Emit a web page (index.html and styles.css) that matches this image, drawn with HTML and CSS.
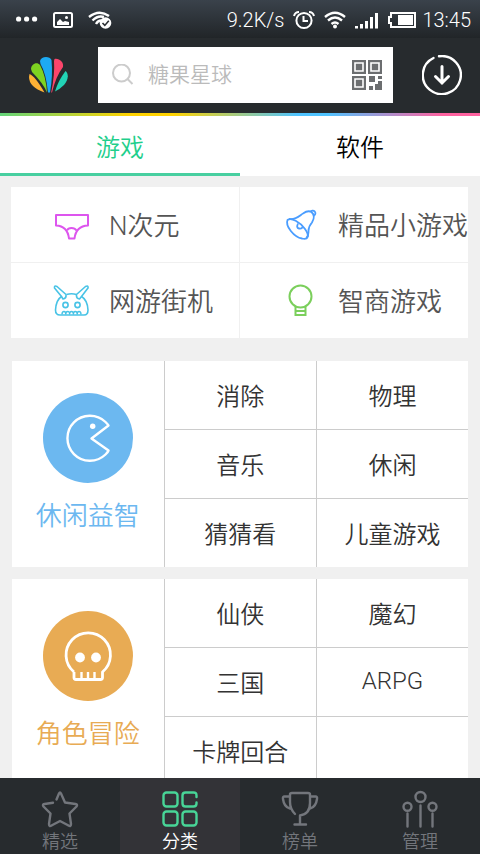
FILE: index.html
```html
<!DOCTYPE html>
<html lang="zh-CN">
<head>
<meta charset="utf-8">
<meta name="viewport" content="width=device-width, initial-scale=1">
<title>分类</title>
<link rel="stylesheet" href="styles.css">
</head>
<body>
<div class="status">
  <div class="status-group status-left">
    <svg width="22" height="20" viewBox="0 0 22 20" fill="#fff"><circle cx="2.600" cy="9" r="2.600"/><circle cx="10.600" cy="9" r="2.600"/><circle cx="18.600" cy="9" r="2.600"/></svg>
    <svg width="20" height="20" viewBox="0 0 20 20"><rect x="1" y="3" width="18" height="14" rx="1.500" fill="none" stroke="#fff" stroke-width="2"/><path d="M4 15V12l3-3 3 3 2-1 4 1v3z" fill="#fff"/><circle cx="13.500" cy="7.500" r="1.500" fill="#fff"/></svg>
    <svg width="24" height="20" viewBox="0 0 24 20"><g fill="none" stroke="#fff" stroke-width="2.400"><path d="M1 7Q11-1 21 6"/><path d="M4.500 10.500Q10 5 16 7"/><path d="M8 14Q10 10.500 13 10.500"/></g><circle cx="17.500" cy="13" r="5.800" fill="#fff"/><path d="M14.500 13l2.300 2.400 4-4.600" fill="none" stroke="#2a2e32" stroke-width="1.600"/></svg>
  </div>
  <div class="status-group status-right">
    <span>9.2K/s</span>
    <svg width="22" height="20" viewBox="0 0 22 20" fill="none" stroke="#fff" stroke-width="2"><circle cx="11" cy="10.500" r="7.600"/><path d="M10.500 6v5H15M1 6Q2 2 6 2M16 2q4 0 5 4"/></svg>
    <svg width="22" height="20" viewBox="0 0 22 20" fill="none" stroke="#fff" stroke-width="2.400"><path d="M1 7Q11-1.500 21 7M4 10.500q7-6 14 0M7.500 14q3.500-3 7 0"/><circle cx="11" cy="16.500" r="2" fill="#fff" stroke="none"/></svg>
    <svg width="24" height="20" viewBox="0 0 24 20" fill="#fff"><path d="M0 16h3v2.500H0zM5 14h3v4.500H5zM10 11h3v7.500h-3zM15 7h3v11.500h-3zM20 3h3v15.500h-3z"/></svg>
    <svg width="28" height="20" viewBox="0 0 28 20"><path d="M3 3h24v14H3V13H1V7h2z" fill="none" stroke="#fff" stroke-width="2"/><path d="M10 5h15v10H10z" fill="#fff"/></svg>
    <span>13:45</span>
  </div>
</div>

<header class="header">
  <a class="logo" href="#" aria-label="首页">
    <svg width="40" height="38" viewBox="0 0 40 38">
      <path d="M1.500 18Q7 20 16.500 36.500Q1 31 1 21Z" fill="#ffb235"/>
      <path d="M3 13C3 8 9 5 12 9Q18 20 19 36.500Q15 27 4 16Z" fill="#7ed321"/>
      <path d="M12 5C13 0 22 0 23.500 4Q25 20 22 36.500H20Q18 17 12.500 8Z" fill="#1daaf2"/>
      <path d="M26.500 3C31 2 36 6 35 11Q28 20 24 36.500H23.200Q27 18 26 5Z" fill="#fb456b"/>
      <path d="M37.500 15C41 18 40.500 24 36 29Q32 33 27 35.500Q30 25 37.500 15Z" fill="#22d3b6"/>
    </svg>
  </a>
  <form class="search">
    <svg width="22" height="22" viewBox="0 0 22 22" fill="none" stroke="#ccc" stroke-width="2"><circle cx="9.500" cy="9" r="8.500"/><path d="M15.500 15l5 5"/></svg>
    <input type="search" placeholder="糖果星球" aria-label="搜索">
    <button type="button" class="scan" aria-label="扫码">
      <svg width="30" height="30" viewBox="0 0 30 30"><g fill="#6c6e70"><path d="M0 0h14v14H0zM16 0h14v14H16zM0 16h14v14H0z"/><path d="M17 16h6v6h-6zM26 16h4v3h-4zM17 26h4v4h-4zM26 21h4v9h-7v-6h3z"/></g><g fill="none" stroke="#fff" stroke-width="1.600"><path d="M3 3h8v8H3zM19 3h8v8h-8zM3 19h8v8H3z"/></g></svg>
    </button>
  </form>
  <button class="download" type="button" aria-label="下载">
    <svg width="40" height="40" viewBox="0 0 40 40" fill="none" stroke="#fff" stroke-linecap="round"><path d="M17 1.300A19 19 0 1 1 11.500 3" stroke-width="2.400"/><path d="M20 11.500V28M13.500 21.500L20 28l6.500-6.500" stroke-width="3"/></svg>
  </button>
</header>

<nav class="tabs">
  <a class="tab active" href="#games">游戏</a>
  <a class="tab" href="#apps">软件</a>
</nav>

<main class="content">
  <section class="quick">
    <a href="#"><svg width="36" height="36" viewBox="0 0 36 36" fill="none" stroke="#dd55ee" stroke-width="2" stroke-linejoin="round"><path d="M3 8h32v10.500Q23 19 21.500 31.500H16Q14.500 19 3 18.500z"/><path d="M14 23.500Q15 21 18.500 21T23.500 23.500"/></svg><span>N次元</span></a>
    <a href="#"><svg width="36" height="36" viewBox="0 0 36 36" fill="none" stroke="#4a9dff" stroke-width="1.800"><path d="M5.500 13C9 10 18 15 23 22S26 33 20 31.500C12 30 3 19 5.500 13z"/><path d="M7 12C15 13 18 8 21 6.500Q26 3 29.500 5Q34 9 30 15.500C26 20 26.500 22 26.500 25Q26.500 29 24.500 31"/><path d="M28.500 5a2.600 2.600 0 1 1 3.500 3.500"/><path d="M16 16.500Q14 21 17 21.500T20.500 20"/></svg><span>精品小游戏</span></a>
    <a href="#"><svg width="36" height="36" viewBox="0 0 36 36" fill="none" stroke="#48c3e6" stroke-width="1.600" stroke-linejoin="round"><path d="M8.500 13.500L1.500 5Q1 2 4 3.500L13 11.500Q13.500 15.500 10 16z"/><path d="M28.500 13.500L35 5Q35.500 2 32.500 3.500L23.500 11.500Q23 15.500 26.500 16z"/><path d="M13.500 11.500Q18.500 10 23.500 11.500M8.500 13.500Q3 17 2.500 27Q2.500 32 7 32H31Q35 32 35 27Q34.500 17 28.500 13.500"/><circle cx="12.500" cy="22" r="2.600"/><circle cx="24.500" cy="22" r="2.600"/><path d="M9 31.500q0-3 2-3 1.800 0 1.800 2.500 0-2.500 1.900-2.500t1.900 2.500q0-2.500 1.900-2.500t1.900 2.500q0-2.500 1.900-2.500t1.900 2.500q0-2.500 1.800-2.500 2 0 2 3" stroke-width="1.400"/></svg><span>网游街机</span></a>
    <a href="#"><svg width="36" height="36" viewBox="0 0 36 36" fill="none" stroke="#7bcf5c" stroke-width="2"><circle cx="18.500" cy="13.500" r="11"/><path d="M13.500 23.500v8.500h10v-8.500M13.500 28h10"/></svg><span>智商游戏</span></a>
  </section>

  <section class="card casual">
    <a class="topic" href="#">
      <svg class="badge" viewBox="0 0 90 90" fill="none" stroke="#fff" stroke-width="2.400" stroke-linejoin="round"><path d="M62.500 29A22.500 22.500 0 1 0 62.500 61.500Q65 59 65.500 57.500L48.500 45.500L65.500 32.500Q65 31.500 62.500 29z"/><circle cx="49.700" cy="33.300" r="2.700" fill="#fff" stroke="none"/></svg>
      <span>休闲益智</span>
    </a>
    <div class="links"><a href="#">消除</a><a href="#">物理</a><a href="#">音乐</a><a href="#">休闲</a><a href="#">猜猜看</a><a href="#">儿童游戏</a></div>
  </section>

  <section class="card adventure">
    <a class="topic" href="#">
      <svg class="badge" viewBox="0 0 90 90" fill="none" stroke="#fff" stroke-width="2.800" stroke-linejoin="round"><path d="M31 61A22.200 22.200 0 1 1 59.500 61V66.500Q59.500 68.500 57.500 68.500H33Q31 68.500 31 66.500z" stroke="none"/><path d="M31 61A22.200 22.200 0 1 1 59.500 61V66.500Q59.500 68.500 57.500 68.500H33Q31 68.500 31 66.500V61"/><path d="M38.500 61v7M45 61v7M51.500 61v7" stroke-width="2.400"/><g fill="#fff" stroke="none"><circle cx="37" cy="46.500" r="4.900"/><circle cx="53" cy="46.500" r="4.900"/></g></svg>
      <span>角色冒险</span>
    </a>
    <div class="links"><a href="#">仙侠</a><a href="#">魔幻</a><a href="#">三国</a><a href="#">ARPG</a><a href="#">卡牌回合</a><span></span></div>
  </section>
</main>

<nav class="bottom">
  <a href="#"><svg viewBox="0 0 40 40"><path d="M16.500 9.500L19 3.500Q20 1.500 21 3.500L25 12.500L35.500 14Q38 14.500 36.500 16.500L29.500 23.500L31 34Q31 37 28.500 35.500L20 31L11.500 35.500Q9 37 9 34L10.500 23.500L3.500 16.500Q2 14.500 4.500 14L13 12.700"/></svg><span>精选</span></a>
  <a class="active" href="#"><svg viewBox="0 0 40 40"><rect x="3.500" y="2.500" width="14" height="14" rx="3"/><rect x="3.500" y="21.500" width="14" height="14" rx="3"/><rect x="22.500" y="21.500" width="14" height="14" rx="3"/><path d="M36.500 7V5.500q0-3-3-3h-8q-3 0-3 3v8q0 3 3 3h8q3 0 3-3V12.500"/></svg><span>分类</span></a>
  <a href="#"><svg viewBox="0 0 40 40"><path d="M15 24Q10 19 10 12V4.500Q10 3 12 3H28Q30 3 30 4.500V13Q30 24 20 25.500V34.500M14.500 34.500H26M10 6.500H4.500Q2.500 6.500 3 9Q4 17 10 18.500M30 6.500H35.500Q37.500 6.500 37 9Q36 17 30 18.500"/></svg><span>榜单</span></a>
  <a href="#"><svg viewBox="0 0 40 40"><circle cx="20.500" cy="7" r="5"/><circle cx="7.500" cy="16.700" r="4"/><circle cx="32.500" cy="16.700" r="4"/><path d="M20.500 15.500v21M7.500 23.500v13M32.500 23.500v13"/></svg><span>管理</span></a>
</nav>
</body>
</html>
```
FILE: styles.css
```css
* {
  box-sizing: border-box;
}

body {
  margin: 0;
  height: 100vh;
  display: flex;
  flex-direction: column;
  overflow: hidden;
  background: #f0f0f0;
  font-family: Roboto, "Noto Sans CJK SC", sans-serif;
  font-weight: 350;
  font-size: 24px;
  color: #333;
}

a {
  color: inherit;
  text-decoration: none;
}

button {
  border: 0;
  padding: 0;
  background: none;
}

svg {
  display: block;
  flex: none;
}

.status {
  display: flex;
  justify-content: space-between;
  height: 38px;
  flex: none;
  padding: 2px 9px 0 16px;
  background: linear-gradient(#3a424b, #212528);
  color: #fff;
  font-size: 20px;
}

.status-group {
  display: flex;
  align-items: center;
}

.status-left {
  gap: 15px;
}

.status-right {
  gap: 9px;
}

.status-right span:last-child {
  margin-left: -3px;
}

.header {
  display: flex;
  align-items: center;
  flex: none;
  height: 78px;
  padding-bottom: 1px;
  background: #272b2e;
  border-bottom: 3px solid;
  border-image: linear-gradient(90deg, #62d47b, #ffd200 27%, #ffd200 36%, #4fc3ff 62%, #4fc3ff 68%, #ff62a0 92%) 1;
}

.logo {
  padding: 0 30px 0 28px;
}

.search {
  display: flex;
  flex: 1;
  min-width: 0;
  align-items: center;
  height: 56px;
  padding: 0 11px 0 14px;
  background: #fff;
}

.search input {
  flex: 1;
  min-width: 0;
  border: 0;
  outline: 0;
  padding: 0;
  margin-left: 14px;
  background: none;
  font: inherit;
  font-size: 21px;
  line-height: 30px;
}

.search input::placeholder {
  color: #bbb;
}

.download {
  padding: 0 18px 0 29px;
}

.tabs {
  display: flex;
  flex: none;
  height: 60px;
  background: #fff;
  color: #000;
}

.tab {
  flex: 1;
  display: flex;
  align-items: center;
  justify-content: center;
  padding-top: 1px;
  border-bottom: 3px solid transparent;
}

.tab.active {
  color: #1fcf8c;
  border-color: #48cfa0;
}

.content {
  flex: 1;
  min-height: 0;
  overflow-y: auto;
  scrollbar-width: none;
  padding: 11px 12px 0 11px;
}

.quick {
  display: grid;
  grid-template-columns: 1fr 1fr;
  gap: 1px;
  margin-bottom: 23px;
}

.quick a {
  display: flex;
  align-items: center;
  gap: 20px;
  height: 75px;
  padding-left: 42px;
  overflow: hidden;
  background: #fff;
  color: #555;
  font-size: 26px;
  white-space: nowrap;
}

.quick span {
  padding-bottom: 2px;
}

.card {
  display: grid;
  grid-template-columns: 1fr 2fr;
  gap: 1px;
  margin: 0 0 12px 1px;
  background: #ccc;
}

.topic {
  display: flex;
  flex-direction: column;
  align-items: center;
  padding-top: 32px;
  background: #fff;
  font-size: 26px;
  line-height: 36px;
}

.badge {
  width: 90px;
  height: 90px;
  border-radius: 50%;
  margin-bottom: 15px;
}

.casual .topic {
  color: #6cb8f0;
}

.casual .badge {
  background: #6cb8f0;
}

.adventure .topic {
  color: #e8ab54;
}

.adventure .badge {
  background: #e8ab54;
}

.links {
  display: grid;
  grid-template-columns: 1fr 1fr;
  grid-auto-rows: 68px;
  gap: 1px;
}

.links > * {
  display: flex;
  align-items: center;
  justify-content: center;
  padding-bottom: 2px;
  background: #fff;
}

.bottom {
  display: flex;
  flex: none;
  height: 76px;
  background: #272b2e;
  color: #73767c;
  font-size: 18px;
  line-height: 24px;
}

.bottom a {
  flex: 1;
  display: flex;
  flex-direction: column;
  align-items: center;
  padding-top: 12px;
}

.bottom svg {
  width: 40px;
  height: 40px;
  fill: none;
  stroke: #73767c;
  stroke-width: 2.4;
  stroke-linecap: round;
  stroke-linejoin: round;
}

.bottom .active {
  background: #333337;
  color: #fff;
}

.bottom .active svg {
  stroke: #48d597;
}
```
